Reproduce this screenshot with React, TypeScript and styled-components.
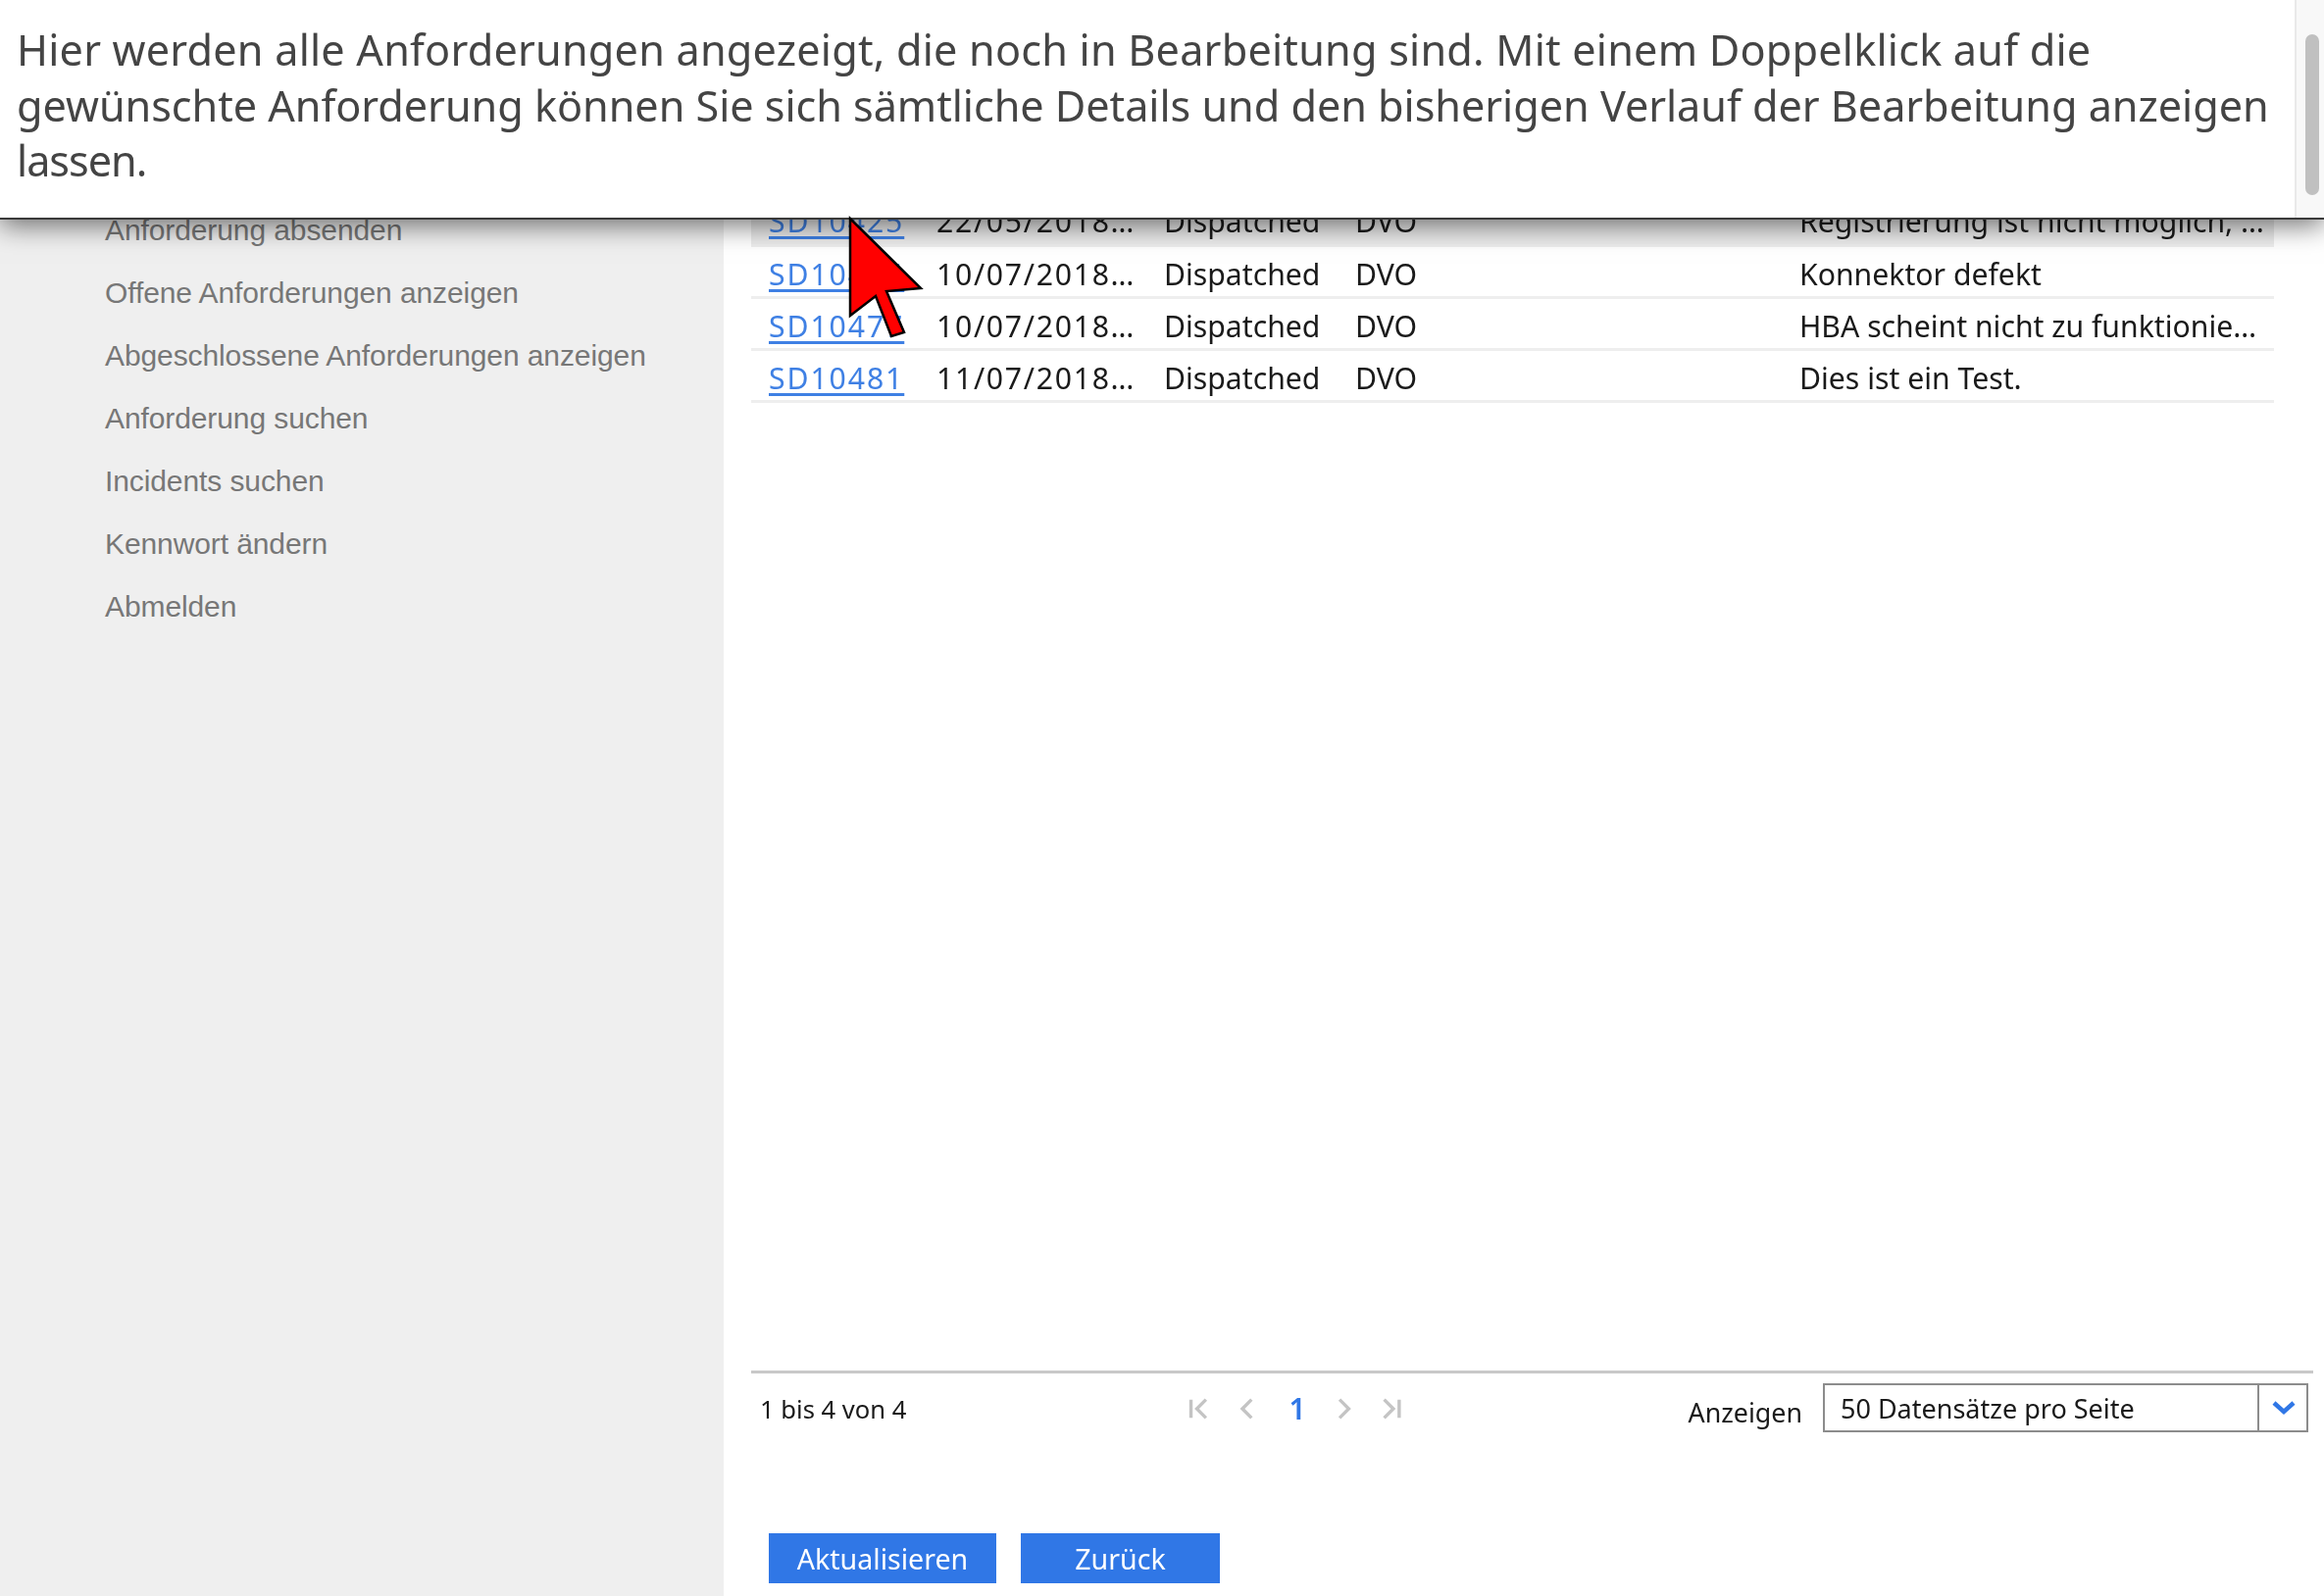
import React from "react"
import styled, { createGlobalStyle } from "styled-components"

const GlobalStyle = createGlobalStyle`
  html, body {
    margin: 0;
    padding: 0;
    background: #ffffff;
  }
`

const Screen = styled.div`
  position: relative;
  width: 2370px;
  height: 1628px;
  overflow: hidden;
`

const Page = styled.div`
  display: flex;
  height: 100%;
  filter: blur(0.55px);
`

const Sidebar = styled.nav`
  flex: 0 0 738px;
  box-sizing: border-box;
  padding: 203px 0 0 107px;
  background: #efefef;
  display: flex;
  flex-direction: column;
`

const NavItem = styled.a`
  height: 64px;
  line-height: 64px;
  font-family: "Liberation Sans", Arial, sans-serif;
  font-size: 30px;
  letter-spacing: -0.1px;
  color: #777777;
`

const Main = styled.main`
  flex: 1;
  min-width: 0;
  box-sizing: border-box;
  padding: 197px 11px 13px 28px;
  display: flex;
  flex-direction: column;
  font-family: "Noto Sans", "Open Sans", sans-serif;
  color: #1a1a1a;
`

const Table = styled.table`
  width: 1553px;
  table-layout: fixed;
  border-collapse: collapse;
  font-size: 30.2px;
`

const Row = styled.tr<{ $shaded?: boolean }>`
  height: 53px;
  background: ${(p) => (p.$shaded ? "#ececec" : "#ffffff")};
  border-bottom: 3px solid #eeeeee;
`

const Cell = styled.td<{ $width: number; $inset?: number }>`
  width: ${(p) => p.$width}px;
  box-sizing: border-box;
  padding: 6px 0 0 ${(p) => p.$inset ?? 0}px;
  white-space: nowrap;
  overflow: hidden;
`

const Numeric = styled.span`
  letter-spacing: 1.7px;
`

const IdLink = styled.a`
  color: #3f80e4;
  letter-spacing: 1.9px;
  text-decoration: underline;
  text-decoration-thickness: 3px;
  text-underline-offset: 4px;
`

const Spacer = styled.div`
  flex: 1;
`

const Pagination = styled.div`
  height: 78px;
  box-sizing: border-box;
  border-top: 3px solid #c9c9c9;
  display: grid;
  grid-template-columns: 437px 217px 1fr;
  align-items: center;
  padding: 0 5px 2px 9px;
  font-size: 25.6px;
`

const Pager = styled.div`
  display: flex;
  align-items: center;
  padding-bottom: 2px;
  color: #c4c4c4;
`

const PagerIcon = styled.svg<{ $gap: number }>`
  width: 24px;
  height: 26px;
  margin-right: ${(p) => p.$gap}px;
  fill: none;
  stroke: currentColor;
  stroke-width: 4;
`

const CurrentPage = styled.span`
  width: 24px;
  margin-right: 28px;
  text-align: center;
  color: #3077e6;
  font-size: 30px;
  font-weight: 600;
`

const PageSize = styled.div`
  display: flex;
  align-items: center;
  justify-content: flex-end;
  gap: 21px;
`

const SizeLabel = styled.span`
  font-size: 26.8px;
  padding-top: 6px;
`

const Select = styled.div`
  width: 495px;
  height: 50px;
  margin-bottom: 3px;
  box-sizing: border-box;
  border: 2px solid #8c8c8c;
  display: flex;
  align-items: center;
  font-size: 27px;
`

const SelectValue = styled.span`
  flex: 1;
  padding-left: 16px;
`

const SelectArrow = styled.span`
  width: 50px;
  height: 100%;
  padding-left: 2px;
  box-sizing: border-box;
  border-left: 2px solid #8c8c8c;
  display: flex;
  align-items: center;
  justify-content: center;
  color: #3077e6;
`

const Actions = styled.div`
  margin-top: 88px;
  padding-left: 18px;
  display: flex;
  gap: 25px;
`

const Button = styled.button<{ $width: number }>`
  width: ${(p) => p.$width}px;
  height: 51px;
  padding: 0;
  border: none;
  background: #3077e6;
  color: #ffffff;
  font-family: "Noto Sans", "Open Sans", sans-serif;
  font-size: 28.6px;
`

const Banner = styled.header`
  position: absolute;
  top: 0;
  left: 0;
  right: 0;
  height: 224px;
  box-sizing: border-box;
  display: flex;
  background: #ffffff;
  border-bottom: 2px solid #3a3a3a;
  box-shadow: 0 6px 26px rgba(0, 0, 0, 0.55);
`

const BannerText = styled.div`
  flex: 1;
  min-width: 0;
  padding: 23px 0 0 17px;
  font-family: "Noto Sans", "Open Sans", sans-serif;
  font-size: 43.2px;
  line-height: 56.5px;
  white-space: nowrap;
  color: #444444;
`

const BannerLine = styled.div<{ $tracking: number }>`
  letter-spacing: ${(p) => p.$tracking}px;
`

const ScrollTrack = styled.div`
  flex: 0 0 30px;
  box-sizing: border-box;
  padding: 35px 5px 0 9px;
  background: #f8f8f8;
  border-left: 2px solid #e9e9e9;
`

const ScrollThumb = styled.div`
  height: 164px;
  border-radius: 8px;
  background: #c0c0c0;
`

const Cursor = styled.svg`
  position: absolute;
  left: 860px;
  top: 218px;
  width: 90px;
  height: 130px;
`

const rows = [
  { id: "SD10425", date: "22/05/2018…", text: "Registrierung ist nicht möglich, …" },
  { id: "SD10476", date: "10/07/2018…", text: "Konnektor defekt" },
  { id: "SD10477", date: "10/07/2018…", text: "HBA scheint nicht zu funktionie…" },
  { id: "SD10481", date: "11/07/2018…", text: "Dies ist ein Test." },
]

const navItems = [
  "Anforderung absenden",
  "Offene Anforderungen anzeigen",
  "Abgeschlossene Anforderungen anzeigen",
  "Anforderung suchen",
  "Incidents suchen",
  "Kennwort ändern",
  "Abmelden",
]

const App: React.FC = () => {
  return (
    <>
      <GlobalStyle />
      <Screen>
        <Page>
          <Sidebar>
            {navItems.map((item) => (
              <NavItem key={item}>{item}</NavItem>
            ))}
          </Sidebar>
          <Main>
            <Table>
              <tbody>
                {rows.map((row, i) => (
                  <Row key={row.id} $shaded={i === 0}>
                    <Cell $width={189} $inset={18}>
                      <IdLink>{row.id}</IdLink>
                    </Cell>
                    <Cell $width={232}>
                      <Numeric>{row.date}</Numeric>
                    </Cell>
                    <Cell $width={195}>Dispatched</Cell>
                    <Cell $width={453}>DVO</Cell>
                    <Cell $width={484}>{row.text}</Cell>
                  </Row>
                ))}
              </tbody>
            </Table>
            <Spacer />
            <Pagination>
              <span>1 bis 4 von 4</span>
              <Pager>
                <PagerIcon $gap={29} viewBox="0 0 24 26">
                  <path d="M3 2v22M21 2L10 13l11 11" />
                </PagerIcon>
                <PagerIcon $gap={31} viewBox="0 0 24 26">
                  <path d="M18 2L7 13l11 11" />
                </PagerIcon>
                <CurrentPage>1</CurrentPage>
                <PagerIcon $gap={27} viewBox="0 0 24 26">
                  <path d="M6 2l11 11-11 11" />
                </PagerIcon>
                <PagerIcon $gap={0} viewBox="0 0 24 26">
                  <path d="M3 2l11 11-11 11M21 2v22" />
                </PagerIcon>
              </Pager>
              <PageSize>
                <SizeLabel>Anzeigen</SizeLabel>
                <Select>
                  <SelectValue>50 Datensätze pro Seite</SelectValue>
                  <SelectArrow>
                    <svg width="24" height="16" viewBox="0 0 24 16" fill="none" stroke="currentColor" strokeWidth="4.5">
                      <path d="M2 3l10 9 10-9" />
                    </svg>
                  </SelectArrow>
                </Select>
              </PageSize>
            </Pagination>
            <Actions>
              <Button $width={232}>Aktualisieren</Button>
              <Button $width={203}>Zurück</Button>
            </Actions>
          </Main>
        </Page>
        <Banner>
          <BannerText>
            <BannerLine $tracking={0.21}>
              Hier werden alle Anforderungen angezeigt, die noch in Bearbeitung sind. Mit einem Doppelklick auf die
            </BannerLine>
            <BannerLine $tracking={-0.04}>
              gewünschte Anforderung können Sie sich sämtliche Details und den bisherigen Verlauf der Bearbeitung anzeigen
            </BannerLine>
            <BannerLine $tracking={-1}>lassen.</BannerLine>
          </BannerText>
          <ScrollTrack>
            <ScrollThumb />
          </ScrollTrack>
        </Banner>
        <Cursor viewBox="860 218 90 130">
          <path
            d="M867 223L939 294L904 297L922 339L909 343L893 302L867 322Z"
            fill="#ff0000"
            stroke="#000000"
            strokeWidth="2.5"
          />
        </Cursor>
      </Screen>
    </>
  )
}

export default App
